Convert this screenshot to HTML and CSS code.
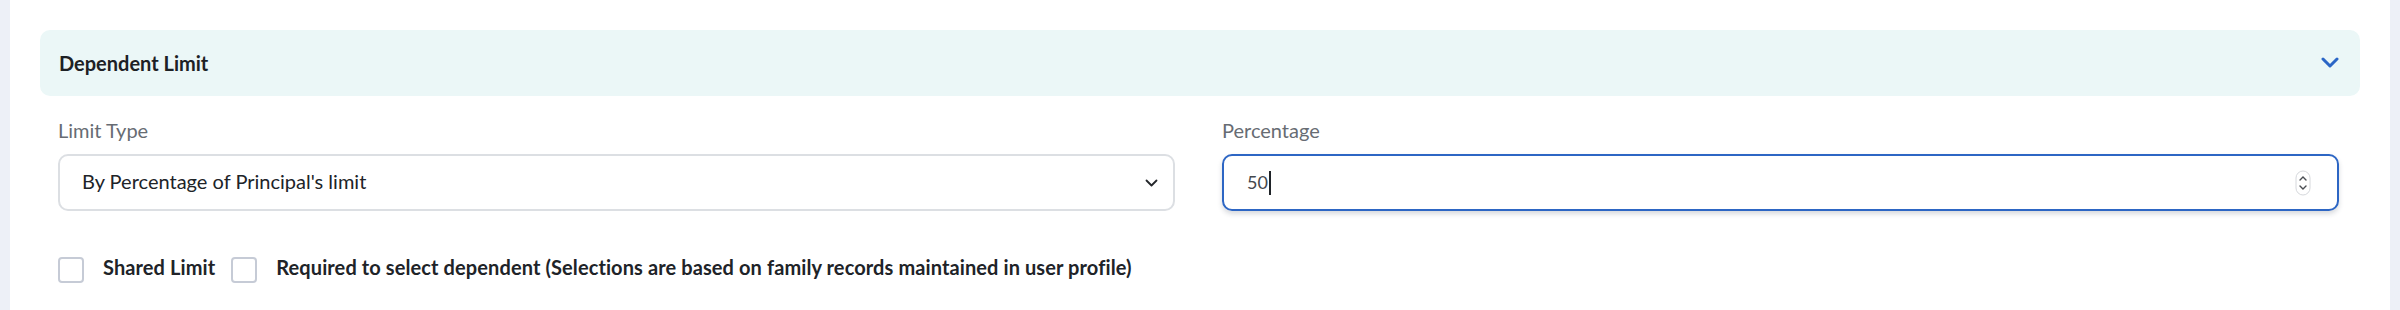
FILE: index.html
```html
<!DOCTYPE html>
<html lang="en">
<head>
    <meta charset="UTF-8">
    <meta name="viewport" content="width=device-width, initial-scale=1.0">
    <title>Dependent Limit</title>
    <link rel="stylesheet" href="styles.css">
</head>
<body>

    <div class="panel">
        <div class="section-header">
            <span class="section-title">Dependent Limit</span>
            <svg class="toggle-icon" width="18" height="11" viewBox="0 0 18 11">
                <path d="M2 2 L9 9 L16 2" fill="none" stroke="#2b66c6" stroke-width="3" stroke-linecap="round" stroke-linejoin="round"/>
            </svg>
        </div>

        <div class="fields">
            <div class="field">
                <label class="field-label">Limit Type</label>
                <div class="select-box">
                    <span>By Percentage of Principal's limit</span>
                    <svg width="13" height="8" viewBox="0 0 13 8">
                        <path d="M1.5 1.5 L6.5 6.5 L11.5 1.5" fill="none" stroke="#24272b" stroke-width="1.8" stroke-linecap="round" stroke-linejoin="round"/>
                    </svg>
                </div>
            </div>

            <div class="field">
                <label class="field-label">Percentage</label>
                <div class="number-box">
                    <span class="value">50<span class="caret"></span></span>
                    <svg class="spinner" width="16" height="26" viewBox="0 0 16 26">
                        <rect x="1" y="1" width="14" height="24" rx="7" fill="#fff" stroke="#d6d8dc" stroke-width="1"/>
                        <path d="M5 10 L8 7 L11 10" fill="none" stroke="#4a4d52" stroke-width="1.4" stroke-linecap="round"/>
                        <path d="M5 16 L8 19 L11 16" fill="none" stroke="#4a4d52" stroke-width="1.4" stroke-linecap="round"/>
                    </svg>
                </div>
            </div>
        </div>

        <div class="checks">
            <label class="check"><span class="box"></span><span class="check-text">Shared Limit</span></label>
            <label class="check"><span class="box"></span><span class="check-text">Required to select dependent (Selections are based on family records maintained in user profile)</span></label>
        </div>
    </div>

</body>
</html>
```

FILE: styles.css
```css
body {
    margin: 0;
    background-color: #edf0f7;
    font-family: Lato, "Noto Sans", sans-serif;
    color: #1f2328;
}

.panel {
    margin: 0 10px;
    height: 310px;
    box-sizing: border-box;
    padding: 30px 30px 0;
    background-color: #fff;
}

.section-header {
    height: 66px;
    display: flex;
    align-items: center;
    justify-content: space-between;
    padding: 0 21px 0 19px;
    background-color: #ebf7f7;
    border-radius: 10px;
}

.section-title {
    font-size: 20px;
    line-height: 24px;
    font-weight: 700;
    color: #1d2125;
}

.toggle-icon {
    margin-bottom: 2px;
}

.fields {
    display: grid;
    grid-template-columns: 1fr 1fr;
    column-gap: 47px;
    padding: 22px 21px 0 18px;
}

.field-label {
    display: block;
    font-size: 20px;
    line-height: 24px;
    color: #676c73;
    margin-bottom: 12px;
}

.select-box,
.number-box {
    height: 57px;
    box-sizing: border-box;
    display: flex;
    align-items: center;
    justify-content: space-between;
    border: 2px solid #dcdfe3;
    border-radius: 10px;
}

.select-box {
    padding: 0 15px 3px 22px;
    font-size: 20px;
    color: #202328;
}

.select-box svg {
    margin-top: 3px;
}

.number-box {
    padding: 0 26px 0 23px;
    border-color: #2d66c4;
    box-shadow: 0 3px 5px rgba(40, 50, 70, 0.18);
    font-size: 18px;
    color: #45484d;
}

.caret {
    display: inline-block;
    width: 2px;
    height: 24px;
    margin-left: 1px;
    vertical-align: -6px;
    background-color: #1f2328;
}

.checks {
    display: flex;
    align-items: flex-start;
    padding: 46px 18px 0;
}

.check {
    display: flex;
    align-items: flex-start;
    font-size: 20px;
    line-height: 24px;
    font-weight: 700;
    letter-spacing: 0.1px;
    color: #202328;
    margin-right: 16px;
}

.check-text {
    margin-top: -2px;
}

.box {
    width: 22px;
    height: 22px;
    border: 2px solid #c6cbd6;
    border-radius: 4px;
    margin-right: 19px;
}
```
